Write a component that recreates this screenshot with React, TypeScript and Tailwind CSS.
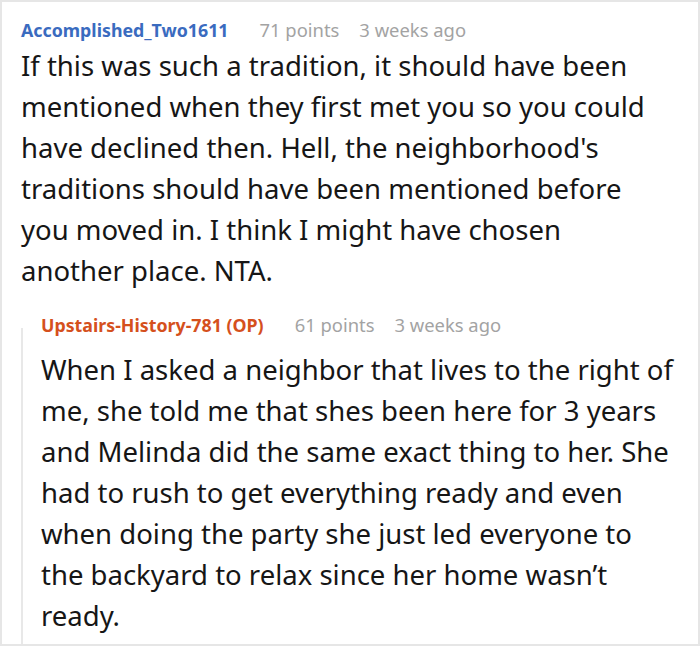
const first = [
  "If this was such a tradition, it should have been",
  "mentioned when they first met you so you could",
  "have declined then. Hell, the neighborhood's",
  "traditions should have been mentioned before",
  "you moved in. I think I might have chosen",
  "another place. NTA.",
];

const reply = [
  "When I asked a neighbor that lives to the right of",
  "me, she told me that shes been here for 3 years",
  "and Melinda did the same exact thing to her. She",
  "had to rush to get everything ready and even",
  "when doing the party she just led everyone to",
  "the backyard to relax since her home wasn’t",
  "ready.",
];

function Meta({ name, color, points }: { name: string; color: string; points: string }) {
  return (
    <div className="flex items-baseline leading-[24px]">
      <span className={`text-[17.8px] font-bold ${color}`}>{name}</span>
      <span className="ml-[31px] text-[18.4px] text-[#a3a3a3]">{points}</span>
      <span className="ml-[20px] text-[18.4px] text-[#a3a3a3]">3 weeks ago</span>
    </div>
  );
}

function Body({ lines }: { lines: string[] }) {
  return (
    <div className="text-[27.5px] leading-[41px] text-[#161616]">
      {lines.map((l) => (
        <div key={l} className="whitespace-nowrap">
          {l}
        </div>
      ))}
    </div>
  );
}

export default function App() {
  return (
    <div className="h-[646px] w-[700px] overflow-hidden bg-white font-['Noto_Sans',sans-serif]">
      <div className="h-full border-2 border-[#e6e6e6] pl-[19px] pt-[16px]">
        <Meta name="Accomplished_Two1611" color="text-[#3a6bbf]" points="71 points" />
        <div className="mt-[3px]">
          <Body lines={first} />
        </div>
        <div className="mt-[22px] flex">
          <div className="mt-[15px] mb-[-8px] w-[2px] shrink-0 bg-[#e8e8e8]" />
          <div className="ml-[18px]">
            <Meta name="Upstairs-History-781 (OP)" color="text-[#d5501d]" points="61 points" />
            <div className="mt-[12px]">
              <Body lines={reply} />
            </div>
          </div>
        </div>
      </div>
    </div>
  );
}
